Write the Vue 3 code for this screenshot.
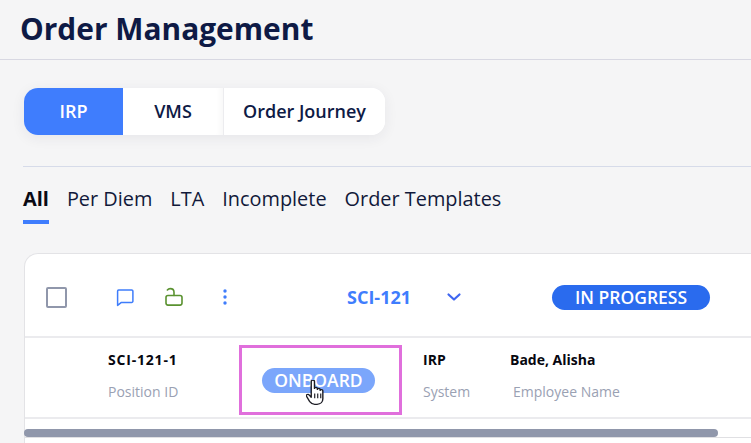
<template>
  <div class="page">
    <header class="top"><h1>Order Management</h1></header>
    <main class="main">
      <div class="switch">
        <button class="sw active irp">IRP</button>
        <button class="sw vms">VMS</button>
        <button class="sw journey">Order Journey</button>
      </div>
      <nav class="tabs">
        <a v-for="t in tabs" :key="t" class="tab" :class="{ on: t === 'All' }">{{ t }}</a>
      </nav>
      <section class="card">
        <div class="head">
          <span class="check"></span>
          <svg class="ic chat" width="20" height="20" viewBox="0 0 20 20" fill="none" stroke="#3f7dfb" stroke-width="1.5" stroke-linejoin="round">
            <path d="M3.7 3h13a1.2 1.2 0 0 1 1.2 1.2v10a1.2 1.2 0 0 1-1.2 1.2H6.4L2.6 18.4V4.2A1.2 1.2 0 0 1 3.7 3z" />
          </svg>
          <svg class="ic lock" width="20" height="20" viewBox="0 0 20 20" fill="none" stroke="#5a9230" stroke-width="1.6" stroke-linecap="round">
            <rect x="2" y="8.5" width="16" height="9.6" rx="2" />
            <path d="M10 8.5V5.2C10 3 8.3 1.6 6.2 1.6 5 1.6 4 2.2 3.4 3" />
          </svg>
          <svg class="ic dots" width="6" height="18" viewBox="0 0 6 18" fill="#3f7dfb">
            <circle cx="3" cy="3" r="1.7" /><circle cx="3" cy="9" r="1.7" /><circle cx="3" cy="15" r="1.7" />
          </svg>
          <span class="code">SCI-121</span>
          <svg class="ic chev" width="16" height="10" viewBox="0 0 16 10" fill="none" stroke="#3f66f0" stroke-width="2.2" stroke-linecap="round" stroke-linejoin="round">
            <path d="M2.5 2.5 8 7.5l5.500-5" />
          </svg>
          <span class="status">IN PROGRESS</span>
        </div>
        <div class="row">
          <div class="cell pos"><b>SCI-121-1</b><small>Position ID</small></div>
          <div class="onboard">
            <span class="pill">ONBOARD</span>
            <svg class="cursor" width="18" height="25" viewBox="0.5 1 15.5 25.2" preserveAspectRatio="none">
              <path fill="#fff" stroke="#1c1c24" stroke-width="1.200" stroke-linejoin="round"
                d="M5 2.500c0-1.700 2.800-1.700 2.800 0v7c0-1.300 2.500-1.300 2.500 0v1c0-1.300 2.400-1.300 2.400 0v1c0-1.200 2.300-1.200 2.300 .3V20c0 3-1.800 5.500-5 5.500H8C5.500 25.500 4.500 24 3.500 22.500L1 17.500c-.8-1.700 1.400-2.700 2.400-1.200L5 18.500z" />
              <path fill="none" stroke="#1c1c24" stroke-width="1" d="M8 14.500v5M10.600 14.500v5M13.200 14.500v5" />
            </svg>
          </div>
          <div class="cell sys"><b>IRP</b><small>System</small></div>
          <div class="cell emp"><b>Bade, Alisha</b><small>Employee Name</small></div>
        </div>
        <div class="track"><div class="thumb"></div></div>
      </section>
    </main>
  </div>
</template>

<script setup>
const tabs = ['All', 'Per Diem', 'LTA', 'Incomplete', 'Order Templates']
</script>

<style>
html, body { margin: 0; background: #f5f5f6; overflow: hidden; }
</style>

<style scoped>
.page {
  width: 751px;
  height: 443px;
  overflow: hidden;
  background: #f5f5f6;
  font-family: "Open Sans", "Noto Sans", sans-serif;
  color: #0e1a45;
}
.top {
  height: 59px;
  border-bottom: 1px solid #d8d8e2;
  padding-left: 20px;
  display: flex;
  align-items: center;
}
h1 {
  margin: 0 0 2px;
  font-size: 29.9px;
  line-height: 36px;
  font-weight: 700;
  color: #0e1a45;
}
.main { padding: 28px 0 0 23px; }
.switch {
  margin-left: 1px;
  display: flex;
  width: 361px;
  height: 47px;
  border-radius: 14px;
  overflow: hidden;
  background: #fff;
  box-shadow: 0 3px 14px rgba(40, 40, 70, 0.07);
}
.sw {
  border: 0;
  padding: 0;
  margin: 0;
  background: #fff;
  font: 600 18px/47px "Open Sans", sans-serif;
  color: #0e1a45;
}
.irp { width: 99px; }
.vms { width: 101px; border-right: 1px solid #ececef; box-shadow: inset -8px 0 8px -8px rgba(0,0,0,.06); }
.journey { flex: 1; }
.active { background: #3f7dfd; color: #fff; }
.tabs {
  margin-top: 31px;
  border-top: 1px solid #d6dbe9;
  display: flex;
  gap: 18px;
  padding-top: 19px;
  height: 38px;
}
.tab {
  font-size: 19.9px;
  line-height: 26px;
  color: #11193a;
}
.on {
  font-weight: 700;
  color: #0a0a14;
  border-bottom: 4px solid #3f7dfd;
  height: 34px;
}
.card {
  margin: 29px 0 0 1px;
  width: 760px;
  height: 190px;
  box-sizing: border-box;
  background: #fff;
  border: 1px solid #e3e3e6;
  border-bottom: 0;
  border-radius: 14px 0 0 0;
}
.head {
  height: 78px;
  border-bottom: 2px solid #ebebee;
  display: flex;
  align-items: center;
  padding: 4px 0 0 21px;
}
.check {
  width: 17px;
  height: 17px;
  border: 2px solid #9097ab;
  border-radius: 2px;
}
.ic { flex: none; }
.chat { margin-left: 48px; }
.lock { margin-left: 29px; }
.dots { margin-left: 38px; }
.code {
  margin-left: 119px;
  font-size: 18px;
  font-weight: 700;
  color: #3f7dfd;
  width: 65px;
}
.chev { margin-left: 34px; }
.status {
  margin-left: 90px;
  width: 158px;
  height: 25px;
  border-radius: 13px;
  background: #2a6bee;
  color: #fff;
  text-align: center;
  font-size: 17.5px;
  font-weight: 600;
  line-height: 24px;
}
.row {
  height: 79px;
  border-bottom: 2px solid #ebebee;
  display: flex;
}
.cell { display: flex; flex-direction: column; }
.cell b { font-size: 14px; font-weight: 700; line-height: 20px; color: #07070f; margin-top: 12px; }
.cell small { font-size: 14px; line-height: 20px; color: #9aa1b3; margin-top: 12px; }
.pos { margin-left: 83px; width: 131px; }
.pos b { letter-spacing: .8px; }
.onboard {
  position: relative;
  width: 157px;
  height: 64px;
  margin-top: 7px;
  border: 3px solid #e06fdc;
  display: flex;
  justify-content: center;
  align-items: center;
}
.pill {
  margin: 1px 4px 0 0;
  width: 113px;
  height: 25px;
  border-radius: 13px;
  background: #7ba6fb;
  color: #fff;
  text-align: center;
  font-size: 17.5px;
  font-weight: 600;
  line-height: 24px;
}
.cursor { position: absolute; left: 64px; top: 32px; }
.sys { margin-left: 21px; width: 87px; }
.emp small { margin-left: 3px; }
.track {
  margin-top: 10px;
  height: 8px;
  border-bottom: 1px solid #e0e0e3;
}
.thumb {
  width: 694px;
  height: 8px;
  border-radius: 4px;
  background: #9097ab;
  margin-left: -1px;
}
</style>
